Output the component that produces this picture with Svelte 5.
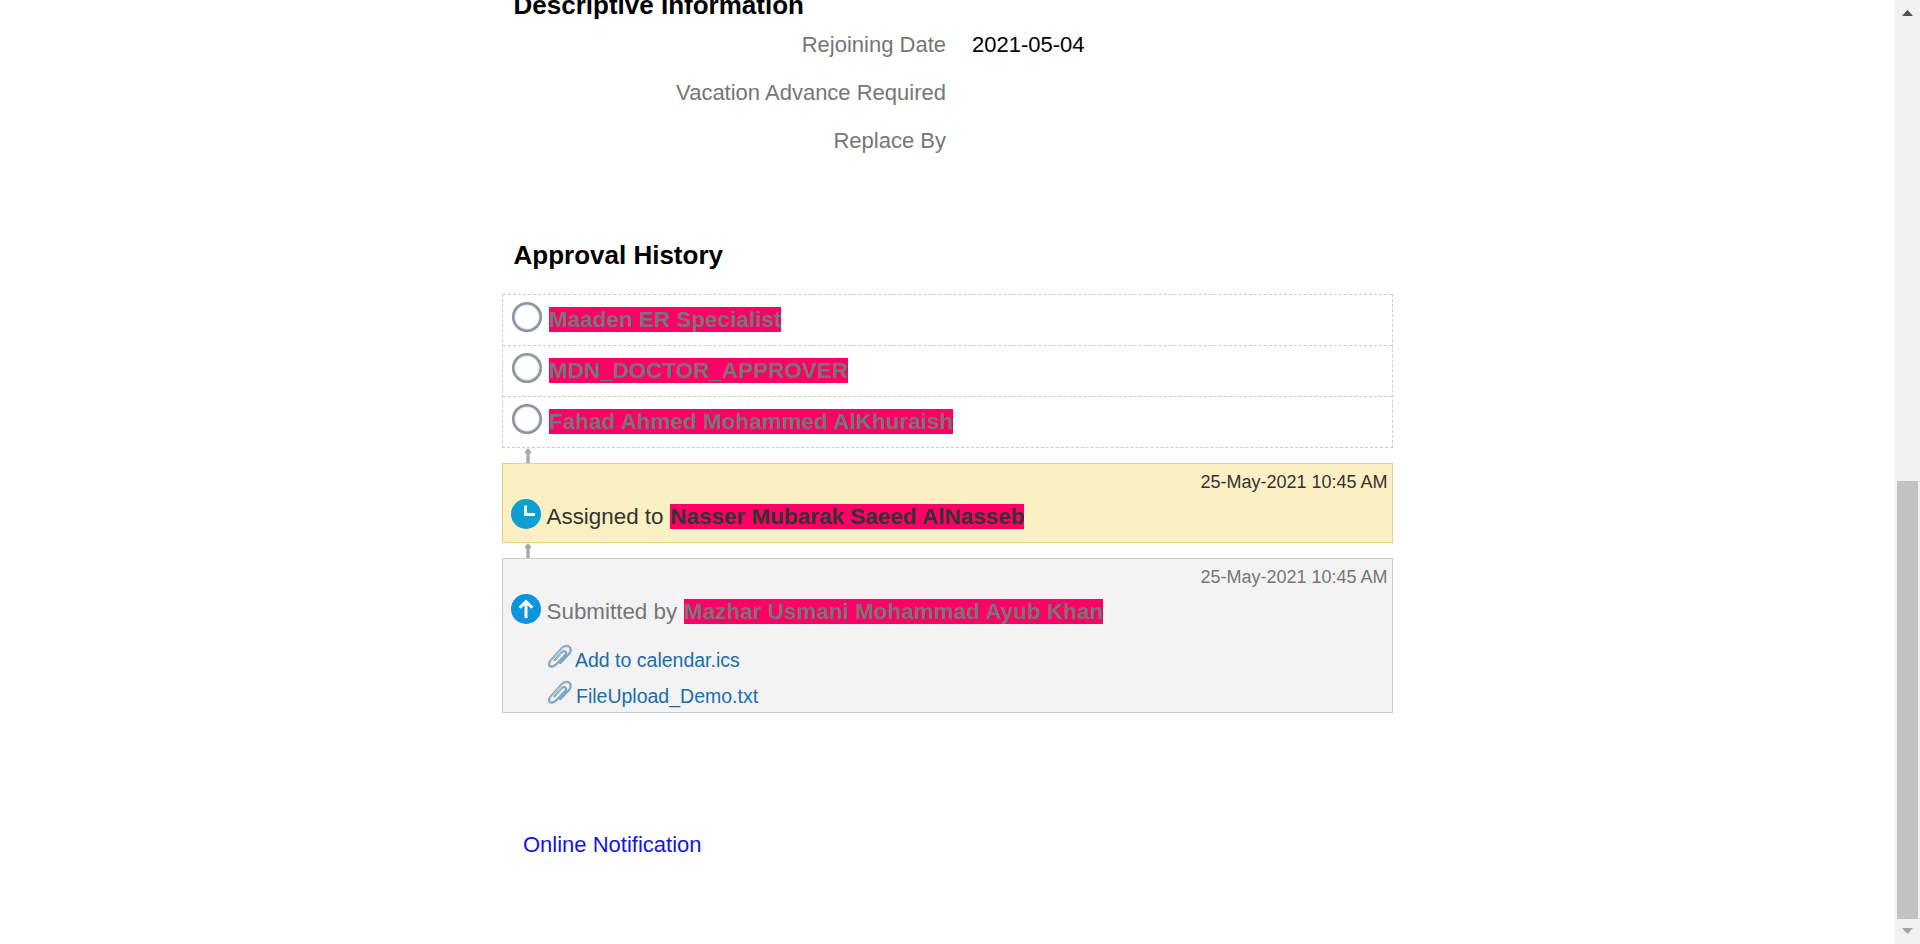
<script>
  const fields = [
    { label: 'Rejoining Date', value: '2021-05-04' },
    { label: 'Vacation Advance Required', value: '' },
    { label: 'Replace By', value: '' }
  ];
  const pending = ['Maaden ER Specialist', 'MDN_DOCTOR_APPROVER', 'Fahad Ahmed Mohammed AlKhuraish'];
  const files = ['Add to calendar.ics', 'FileUpload_Demo.txt'];
</script>

{#snippet connector()}
  <div class="connector">
    <svg width="8" height="15" viewBox="0 0 8 15">
      <path d="M4 0 7 3.5V5.5H1V3.5Z" fill="#a3abb5" />
      <path d="M4 2V15" stroke="#a3abb5" stroke-width="3.4" />
    </svg>
  </div>
{/snippet}

<div class="page">
  <main>
    <h2 class="first">Descriptive Information</h2>
    <div class="fields">
      {#each fields as f}
        <div class="field"><span class="label">{f.label}</span><span>{f.value}</span></div>
      {/each}
    </div>

    <h2 class="second">Approval History</h2>

    <div class="pending">
      {#each pending as name}
        <div class="row">
          <svg width="32" height="32" viewBox="0 0 32 32">
            <circle cx="16" cy="16" r="12.2" fill="#fff" stroke="#dfe5ec" stroke-width="1.6" />
            <circle cx="16" cy="16" r="13.8" fill="none" stroke="#8c96a0" stroke-width="2.6" />
          </svg>
          <mark>{name}</mark>
        </div>
      {/each}
    </div>

    {@render connector()}

    <section class="assigned">
      <time>25-May-2021 10:45 AM</time>
      <div class="entry">
        <svg width="32" height="32" viewBox="0 0 32 32">
          <circle cx="16" cy="16" r="15" fill="#0c9fd0" />
          <path d="M15.5 7.5V16.5H25" fill="none" stroke="#fff" stroke-width="2.8" />
        </svg>
        <span>Assigned to <mark>Nasser Mubarak Saeed AlNasseb</mark></span>
      </div>
    </section>

    {@render connector()}

    <section class="submitted">
      <time>25-May-2021 10:45 AM</time>
      <div class="entry">
        <svg width="32" height="32" viewBox="0 0 32 32">
          <circle cx="16" cy="16" r="15" fill="#0c94dc" />
          <path d="M16 25V8.5M9.7 14.8 16 8.5l6.3 6.3" fill="none" stroke="#fff" stroke-width="3" />
        </svg>
        <span>Submitted by <mark>Mazhar Usmani Mohammad Ayub Khan</mark></span>
      </div>
      <div class="files">
        {#each files as file}
          <a href="#file">
            <svg width="25" height="24" viewBox="0 0 25 24">
              <g fill="none" stroke-linecap="round" stroke-linejoin="round">
                <path d="M7.6 16.2 15 8.2Q17 6.3 18.6 7.6 19.8 9 18.2 11L9 20.6Q5.4 23.4 2.6 22.2 1.2 19.4 3.6 16.4L15 3.9Q19.2 0.6 22.6 3 25 6 22.2 9.8L13.2 19.2" stroke="#7fa6c4" stroke-width="2.2" />
                <path d="M3.6 17 15.2 4.4Q18.8 1.8 21.6 3.2M9 15.4 15.4 8.4" stroke="#bdd5e7" stroke-width=".9" />
              </g>
            </svg>
            <span>{file}</span>
          </a>
        {/each}
      </div>
    </section>

    <a class="online" href="#notification">Online Notification</a>
  </main>

  <div class="scrollbar">
    <svg width="25" height="25" viewBox="0 0 25 25"><path d="M7 16 12.5 10 18 16Z" fill="#505050" /></svg>
    <div class="thumb"></div>
    <svg width="25" height="25" viewBox="0 0 25 25"><path d="M7 9 12.5 15 18 9Z" fill="#a3a3a3" /></svg>
  </div>
</div>

<style>
  :global(body) { margin: 0; background: #fff; overflow: hidden; }
  .page {
    display: flex;
    height: 944px;
    overflow: hidden;
    font-family: "Liberation Sans", Arial, sans-serif;
    color: #000;
  }
  main { width: 891px; margin: 0 auto; }
  svg { display: block; flex: none; }
  h2 { margin: 0; font-size: 26px; line-height: 30px; padding-left: 11.5px; white-space: nowrap; }
  .first { margin-top: -10px; }
  .fields { font-size: 22px; padding-top: 1px; }
  .field { display: flex; gap: 26px; height: 48px; line-height: 48px; white-space: nowrap; }
  .label { width: 444px; text-align: right; color: #767676; }
  .second { margin-top: 75px; }
  .pending { margin-top: 24px; border: 1px dashed #ccc; border-top: 0; }
  .row {
    display: flex;
    box-sizing: border-box;
    height: 51px;
    border-top: 1px dashed #ccc;
    padding: 6px 0 0 8px;
    gap: 6px;
    color: #767676;
  }
  mark { background: #ff0066; color: inherit; font-weight: bold; letter-spacing: 0.05px; }
  .row mark { font-size: 22.4px; line-height: 25px; height: 25px; margin-top: 6px; }
  .connector { height: 15px; padding-left: 22px; }
  section { box-sizing: border-box; border: 1px solid; display: flex; flex-direction: column; }
  time { text-align: right; font-size: 18px; line-height: 20px; padding: 8px 4.5px 0 0; }
  .entry {
    display: flex;
    gap: 4.5px;
    padding-left: 7px;
    margin-top: 6px;
    height: 32px;
    font-size: 22.4px;
    white-space: nowrap;
  }
  .entry span { line-height: 25px; padding-top: 6px; }
  .entry mark { margin-left: 0.6px; }
  .assigned { height: 80px; background: #fbf0c3; border-color: #ebce7d; color: #333; }
  .submitted { height: 155px; background: #f3f3f3; border-color: #ccc; color: #767676; }
  .files { padding: 19px 0 0 43.5px; }
  .files a {
    display: flex;
    gap: 3.5px;
    height: 36px;
    font-size: 19.5px;
    line-height: 24px;
    color: #1a6da8;
    text-decoration: none;
  }
  .files a + a { gap: 4.5px; }
  .files a span { padding-top: 4px; }
  .online {
    display: inline-block;
    margin: 119px 0 0 21px;
    font-size: 22px;
    line-height: 26px;
    color: #1414e6;
    text-decoration: none;
  }
  .scrollbar {
    width: 25px;
    display: flex;
    flex-direction: column;
    background: #f0f0f0;
  }
  .thumb { height: 438px; margin: auto 2px 0; background: #c1c1c1; }
</style>
